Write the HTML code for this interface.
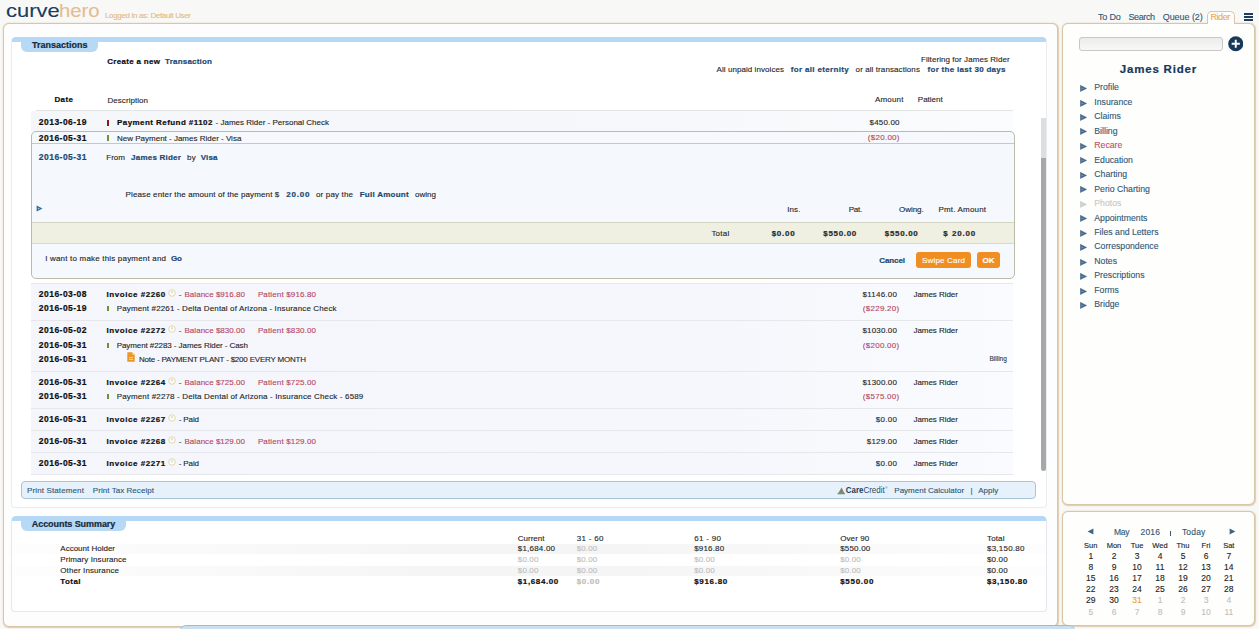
<!DOCTYPE html>
<html><head><meta charset="utf-8"><title>curvehero</title>
<style>
html,body{margin:0;padding:0}
body{width:1259px;height:629px;overflow:hidden;position:relative;background:#f8f8f7;font-family:"Liberation Sans",sans-serif}
.t{position:absolute;white-space:pre;-webkit-text-stroke:0.12px currentColor}
.ic{position:absolute;display:block}
.b{position:absolute;box-sizing:border-box}
</style></head><body>
<!-- logo -->

<!-- main outer panel -->
<div class="b" style="left:3px;top:23px;width:1055px;height:604px;border:1px solid #d9c6a8;border-radius:6px;background:#fdfdfd;box-shadow:0.8px 0.8px 1px rgba(210,175,130,.55),0 0 1.5px rgba(240,205,150,.5)"></div>
<!-- right panels -->
<div class="b" style="left:1062px;top:23px;width:193px;height:482px;border:1px solid #d9c6a8;border-radius:6px;background:#fefefd;box-shadow:0.8px 0.8px 1px rgba(210,175,130,.55),0 0 1.5px rgba(240,205,150,.5)"></div>
<div class="b" style="left:1062px;top:511px;width:193px;height:115px;border:1px solid #d9c6a8;border-radius:6px;background:#fefefd;box-shadow:0.8px 0.8px 1px rgba(210,175,130,.55),0 0 1.5px rgba(240,205,150,.5)"></div>

<!-- nav tab Rider -->
<div class="b" style="left:1207px;top:11px;width:28px;height:13px;border:1px solid #d9c6a8;border-bottom:none;border-radius:5px 5px 0 0;background:#fdfdfd"></div>
<!-- hamburger -->
<div class="b" style="left:1243.5px;top:13.4px;width:9px;height:1.7px;background:#1c3d62"></div>
<div class="b" style="left:1243.5px;top:16.4px;width:9px;height:1.7px;background:#1c3d62"></div>
<div class="b" style="left:1243.5px;top:19.4px;width:9px;height:1.7px;background:#1c3d62"></div>

<!-- transactions panel -->
<div class="b" style="left:11px;top:37px;width:1036px;height:471px;border:1px solid #eaedf0;border-top:5px solid #b4d8f6;border-radius:5px 5px 4px 4px;background:#fff"></div>
<div class="b" style="left:21px;top:41px;width:77px;height:10.5px;background:#b6d9f6;border-radius:0 0 6px 6px"></div>

<!-- header line -->
<div class="b" style="left:36px;top:110px;width:977px;height:1px;background:#e2e4e6"></div>
<!-- row 1 bg -->
<div class="b" style="left:31px;top:111px;width:982px;height:21px;background:linear-gradient(90deg,#f4f6fa,#f6f8fb 70%,#fbfcfd)"></div>
<div class="b" style="left:106.5px;top:120px;width:2.2px;height:5.5px;background:#8a1c1c"></div>

<!-- payment box -->
<div class="b" style="left:31px;top:131px;width:984px;height:147.5px;border:1px solid #b9bca6;border-radius:5px;background:#f5f8fc"></div>
<div class="b" style="left:32px;top:143px;width:982px;height:1px;background:#c4c7cb"></div>
<div class="b" style="left:32px;top:222px;width:982px;height:22px;background:#eff0e2;border-top:1px solid #d4d6c4;border-bottom:1px solid #d8dac8"></div>
<svg class="ic" style="left:35.5px;top:204.5px" width="7" height="7" viewBox="0 0 7 7"><path d="M0.6 0.6L6.4 3.5L0.6 6.4Z" fill="#2a6a9a"/><path d="M1.8 2.4L4 3.5L1.8 4.6Z" fill="#fff" opacity=".6"/></svg>
<div class="b" style="left:916px;top:252px;width:55px;height:16px;background:#f18e22;border-radius:3px"></div>
<div class="b" style="left:976.5px;top:252px;width:23px;height:16px;background:#f18e22;border-radius:3px"></div>

<!-- group bgs -->
<div class="b" style="left:31px;top:283px;width:982px;height:37px;background:linear-gradient(90deg,#f4f6fb,#f5f7fc 70%,#fafbfe);border-top:1px solid #e6e7eb"></div>
<div class="b" style="left:31px;top:320px;width:982px;height:51px;background:linear-gradient(90deg,#f4f6fb,#f5f7fc 70%,#fafbfe);border-top:1px solid #e6e7eb"></div>
<div class="b" style="left:31px;top:371px;width:982px;height:37px;background:linear-gradient(90deg,#f4f6fb,#f5f7fc 70%,#fafbfe);border-top:1px solid #e6e7eb"></div>
<div class="b" style="left:31px;top:408px;width:982px;height:22px;background:linear-gradient(90deg,#f4f6fb,#f5f7fc 70%,#fafbfe);border-top:1px solid #e6e7eb"></div>
<div class="b" style="left:31px;top:430px;width:982px;height:22px;background:linear-gradient(90deg,#f4f6fb,#f5f7fc 70%,#fafbfe);border-top:1px solid #e6e7eb"></div>
<div class="b" style="left:31px;top:452px;width:982px;height:23px;background:linear-gradient(90deg,#f4f6fb,#f5f7fc 70%,#fafbfe);border-top:1px solid #e6e7eb;border-bottom:1px solid #e6e7eb"></div>

<!-- scrollbar -->
<div class="b" style="left:1041px;top:118px;width:5px;height:352px;background:#dcdee0;border-radius:0 0 2px 2px"></div>
<div class="b" style="left:1041px;top:158px;width:4.5px;height:312.5px;background:#a6a7a8;border-radius:0 0 2.5px 2.5px"></div>

<!-- footer bar -->
<div class="b" style="left:21px;top:481px;width:1015px;height:18px;background:#e7f1fb;border:1px solid #a6c4dc;border-radius:4px"></div>
<svg class="ic" style="left:837px;top:485px" width="52" height="10" viewBox="0 0 52 10"><path d="M0.5 8.6C2 7.6 3.5 4 4.5 2.5C5.5 4 6.5 7 8 8.6Z" fill="#7c8a62"/><path d="M0.5 8.8H8" stroke="#5a6a80" stroke-width="0.8"/><text x="8.8" y="8.4" font-family="Liberation Sans" font-weight="700" font-size="8.8" fill="#1f3c5a" textLength="17.6" lengthAdjust="spacingAndGlyphs">Care</text><text x="26.4" y="8.4" font-family="Liberation Sans" font-size="8.8" fill="#2d4a66" textLength="21.4" lengthAdjust="spacingAndGlyphs">Credit</text><text x="48.2" y="4" font-family="Liberation Sans" font-size="3" fill="#2d4a66">®</text></svg>

<!-- accounts summary -->
<div class="b" style="left:11px;top:516px;width:1036px;height:96px;border:1px solid #e4e8ec;border-top:5px solid #b4d8f6;border-radius:5px 5px 4px 4px;background:#fff"></div>
<div class="b" style="left:21px;top:520px;width:105px;height:10.5px;background:#b6d9f6;border-radius:0 0 6px 6px"></div>
<div class="b" style="left:12px;top:543.5px;width:1034px;height:10.5px;background:linear-gradient(90deg,#fdfdfd,#f5f5f5 40%,#f5f5f5 60%,#fdfdfd)"></div>
<div class="b" style="left:12px;top:565.5px;width:1034px;height:10.5px;background:linear-gradient(90deg,#fdfdfd,#f5f5f5 40%,#f5f5f5 60%,#fdfdfd)"></div>

<!-- bottom blue bar -->
<div class="b" style="left:180px;top:625px;width:895px;height:10px;background:#cadff0;border-top:1px solid #9cbad6;border-radius:6px 6px 0 0"></div>

<!-- right panel: search + plus -->
<div class="b" style="left:1078.5px;top:37px;width:144px;height:13.5px;border:1px solid #c8c8c8;border-radius:3px;background:linear-gradient(#ececec,#f8f8f8)"></div>
<svg class="ic" style="left:1227.5px;top:36px" width="15.5" height="15.5" viewBox="0 0 16 16"><circle cx="8" cy="8" r="7.8" fill="#173a5a"/><path d="M8 3.8V12.2M3.8 8H12.2" stroke="#fff" stroke-width="2"/></svg>

<!-- calendar arrows -->
<div class="b" style="left:1170.4px;top:530.5px;width:1.1px;height:5px;background:#3d5a75"></div>
<svg class="ic" style="left:1087px;top:528px" width="7" height="7" viewBox="0 0 7 7"><path d="M6.4 0.6L0.6 3.5L6.4 6.4Z" fill="#3d6585"/></svg>
<svg class="ic" style="left:1229px;top:528px" width="7" height="7" viewBox="0 0 7 7"><path d="M0.6 0.6L6.4 3.5L0.6 6.4Z" fill="#3d6585"/></svg>

<span class='t' style='left:5.70px;top:2.00px;font-size:18.5px;line-height:18.5px;color:#1b3c60;transform:scaleX(1.1845);transform-origin:0 0'>curve</span>
<span class='t' style='left:59.20px;top:2.00px;font-size:18.5px;line-height:18.5px;color:#e4bd90;transform:scaleX(1.0964);transform-origin:0 0'>hero</span>
<span class='t' style='left:105.00px;top:12.00px;font-size:8px;line-height:8px;color:#e1bb84;letter-spacing:-0.349px'>Logged in as: Default User</span>
<span class='t' style='left:1097.90px;top:13.00px;font-size:9px;line-height:9px;color:#2f5877;letter-spacing:-0.154px'>To Do</span>
<span class='t' style='left:1128.40px;top:13.00px;font-size:9px;line-height:9px;color:#2f5877;letter-spacing:-0.366px'>Search</span>
<span class='t' style='left:1162.70px;top:13.00px;font-size:9px;line-height:9px;color:#2f5877;letter-spacing:-0.054px'>Queue (2)</span>
<span class='t' style='left:1210.50px;top:13.00px;font-size:9px;line-height:9px;color:#e8a85a;letter-spacing:-0.454px'>Rider</span>
<span class='t' style='left:32.00px;top:41.00px;font-size:9px;line-height:9px;color:#17293b;font-weight:700;-webkit-text-stroke:0.2px currentColor'>Transactions</span>
<span class='t' style='left:107.20px;top:58.00px;font-size:8.0px;line-height:8.0px;color:#0e0e0e;font-weight:700;-webkit-text-stroke:0.2px currentColor;letter-spacing:0.313px'>Create a new</span>
<span class='t' style='left:165.00px;top:58.00px;font-size:8.0px;line-height:8.0px;color:#1c4a72;font-weight:700;-webkit-text-stroke:0.2px currentColor;letter-spacing:0.209px'>Transaction</span>
<span class='t' style='left:921.00px;top:56.00px;font-size:8px;line-height:8px;color:#262626;letter-spacing:0.061px'>Filtering for James Rider</span>
<span class='t' style='left:716.50px;top:66.00px;font-size:8px;line-height:8px;color:#262626;letter-spacing:0.069px'>All unpaid invoices</span>
<span class='t' style='left:790.70px;top:66.00px;font-size:8.0px;line-height:8.0px;color:#1c4a72;font-weight:700;-webkit-text-stroke:0.2px currentColor;letter-spacing:0.340px'>for all eternity</span>
<span class='t' style='left:855.60px;top:66.00px;font-size:8px;line-height:8px;color:#262626;letter-spacing:0.089px'>or all transactions</span>
<span class='t' style='left:927.50px;top:66.00px;font-size:8.0px;line-height:8.0px;color:#1c4a72;font-weight:700;-webkit-text-stroke:0.2px currentColor;letter-spacing:0.290px'>for the last 30 days</span>
<span class='t' style='left:54.40px;top:96.00px;font-size:8.0px;line-height:8.0px;color:#0e0e0e;font-weight:700;-webkit-text-stroke:0.2px currentColor;letter-spacing:0.385px'>Date</span>
<span class='t' style='left:107.50px;top:97.00px;font-size:8px;line-height:8px;color:#262626;letter-spacing:0.048px'>Description</span>
<span class='t' style='left:874.90px;top:96.00px;font-size:8px;line-height:8px;color:#262626;letter-spacing:0.184px'>Amount</span>
<span class='t' style='left:917.80px;top:96.00px;font-size:8px;line-height:8px;color:#262626'>Patient</span>
<span class='t' style='left:38.80px;top:118.00px;font-size:8.5px;line-height:8.5px;color:#0e0e0e;font-weight:700;-webkit-text-stroke:0.2px currentColor;letter-spacing:0.468px'>2013-06-19</span>
<span class='t' style='left:117.00px;top:119.00px;font-size:8.0px;line-height:8.0px;color:#0e0e0e;font-weight:700;-webkit-text-stroke:0.2px currentColor;letter-spacing:0.434px'>Payment Refund #1102</span>
<span class='t' style='left:215.60px;top:119.00px;font-size:8px;line-height:8px;color:#262626'>- James Rider - Personal Check</span>
<span class='t' style='left:869.50px;top:119.00px;font-size:8px;line-height:8px;color:#262626;letter-spacing:0.180px'>$450.00</span>
<span class='t' style='left:38.80px;top:134.00px;font-size:8.5px;line-height:8.5px;color:#0e0e0e;font-weight:700;-webkit-text-stroke:0.2px currentColor;letter-spacing:0.468px'>2016-05-31</span>
<div class='ic' style='left:106.5px;top:135.3px;width:2.5px;height:5.5px;background:#6f8f3a'></div>
<span class='t' style='left:117.00px;top:135.00px;font-size:8px;line-height:8px;color:#262626'>New Payment - James Rider - Visa</span>
<span class='t' style='left:867.80px;top:134.00px;font-size:8px;line-height:8px;color:#b7475f;letter-spacing:0.272px'>($20.00)</span>
<span class='t' style='left:38.80px;top:153.00px;font-size:8.5px;line-height:8.5px;color:#1c4a72;font-weight:700;-webkit-text-stroke:0.2px currentColor;letter-spacing:0.468px'>2016-05-31</span>
<span class='t' style='left:106.30px;top:154.00px;font-size:8px;line-height:8px;color:#262626;letter-spacing:-0.024px'>From</span>
<span class='t' style='left:131.10px;top:154.00px;font-size:8.0px;line-height:8.0px;color:#1c4a72;font-weight:700;-webkit-text-stroke:0.2px currentColor;letter-spacing:0.211px'>James Rider</span>
<span class='t' style='left:187.00px;top:154.00px;font-size:8px;line-height:8px;color:#262626;letter-spacing:0.347px'>by</span>
<span class='t' style='left:200.70px;top:154.00px;font-size:8.0px;line-height:8.0px;color:#1c4a72;font-weight:700;-webkit-text-stroke:0.2px currentColor;letter-spacing:0.163px'>Visa</span>
<span class='t' style='left:125.60px;top:191.00px;font-size:8px;line-height:8px;color:#262626;letter-spacing:0.121px'>Please enter the amount of the payment $</span>
<span class='t' style='left:286.30px;top:191.00px;font-size:8.0px;line-height:8.0px;color:#1c4a72;font-weight:700;-webkit-text-stroke:0.2px currentColor;letter-spacing:0.767px'>20.00</span>
<span class='t' style='left:316.00px;top:191.00px;font-size:8px;line-height:8px;color:#262626;letter-spacing:0.158px'>or pay the</span>
<span class='t' style='left:359.70px;top:191.00px;font-size:8.0px;line-height:8.0px;color:#1c4a72;font-weight:700;-webkit-text-stroke:0.2px currentColor;letter-spacing:0.264px'>Full Amount</span>
<span class='t' style='left:415.00px;top:191.00px;font-size:8px;line-height:8px;color:#262626;letter-spacing:0.023px'>owing</span>
<span class='t' style='left:787.20px;top:206.00px;font-size:8px;line-height:8px;color:#262626;letter-spacing:0.098px'>Ins.</span>
<span class='t' style='left:848.70px;top:206.00px;font-size:8px;line-height:8px;color:#262626;letter-spacing:-0.245px'>Pat.</span>
<span class='t' style='left:899.00px;top:206.00px;font-size:8px;line-height:8px;color:#262626;letter-spacing:-0.041px'>Owing.</span>
<span class='t' style='left:938.40px;top:206.00px;font-size:8px;line-height:8px;color:#262626;letter-spacing:0.180px'>Pmt. Amount</span>
<span class='t' style='left:711.40px;top:230.00px;font-size:8px;line-height:8px;color:#262626;letter-spacing:0.223px'>Total</span>
<span class='t' style='left:771.70px;top:230.00px;font-size:8.0px;line-height:8.0px;color:#2a2a2a;font-weight:700;-webkit-text-stroke:0.2px currentColor;letter-spacing:0.717px'>$0.00</span>
<span class='t' style='left:823.30px;top:230.00px;font-size:8.0px;line-height:8.0px;color:#2a2a2a;font-weight:700;-webkit-text-stroke:0.2px currentColor;letter-spacing:0.680px'>$550.00</span>
<span class='t' style='left:884.80px;top:230.00px;font-size:8.0px;line-height:8.0px;color:#2a2a2a;font-weight:700;-webkit-text-stroke:0.2px currentColor;letter-spacing:0.680px'>$550.00</span>
<span class='t' style='left:943.30px;top:230.00px;font-size:8.0px;line-height:8.0px;color:#2a2a2a;font-weight:700;-webkit-text-stroke:0.2px currentColor'>$</span>
<span class='t' style='left:952.00px;top:230.00px;font-size:8.0px;line-height:8.0px;color:#2a2a2a;font-weight:700;-webkit-text-stroke:0.2px currentColor;letter-spacing:0.817px'>20.00</span>
<span class='t' style='left:45.20px;top:255.00px;font-size:8px;line-height:8px;color:#262626;letter-spacing:0.188px'>I want to make this payment and</span>
<span class='t' style='left:171.00px;top:255.00px;font-size:8.0px;line-height:8.0px;color:#1c4a72;font-weight:700;-webkit-text-stroke:0.2px currentColor;letter-spacing:-0.309px'>Go</span>
<span class='t' style='left:879.20px;top:257.00px;font-size:8.0px;line-height:8.0px;color:#1c4a72;font-weight:700;-webkit-text-stroke:0.2px currentColor;letter-spacing:-0.067px'>Cancel</span>
<span class='t' style='left:922.00px;top:257.00px;font-size:8px;line-height:8px;color:#ffffff;letter-spacing:0.182px'>Swipe Card</span>
<span class='t' style='left:982.50px;top:257.00px;font-size:8.0px;line-height:8.0px;color:#ffffff;font-weight:700;-webkit-text-stroke:0.2px currentColor'>OK</span>
<span class='t' style='left:38.80px;top:290.00px;font-size:8.5px;line-height:8.5px;color:#0e0e0e;font-weight:700;-webkit-text-stroke:0.2px currentColor;letter-spacing:0.468px'>2016-03-08</span>
<span class='t' style='left:106.60px;top:291.00px;font-size:8.0px;line-height:8.0px;color:#0e0e0e;font-weight:700;-webkit-text-stroke:0.2px currentColor;letter-spacing:0.554px'>Invoice #2260</span>
<svg class='ic' style='left:168.1px;top:288.7px' width='8' height='8' viewBox='0 0 8 8'><circle cx='4' cy='4' r='3.3' fill='#fdfdf6' stroke='#ddd6a6' stroke-width='0.9'/><path d='M4 2.2V4.3' stroke='#a8a0b8' stroke-width='0.7'/></svg>
<span class='t' style='left:178.70px;top:291.00px;font-size:8px;line-height:8px;color:#262626'>-</span>
<span class='t' style='left:184.50px;top:291.00px;font-size:8px;line-height:8px;color:#b7475f;letter-spacing:0.031px'>Balance $916.80</span>
<span class='t' style='left:257.90px;top:291.00px;font-size:8px;line-height:8px;color:#b7475f;letter-spacing:0.147px'>Patient $916.80</span>
<span class='t' style='left:862.50px;top:291.00px;font-size:8px;line-height:8px;color:#262626;letter-spacing:0.231px'>$1146.00</span>
<span class='t' style='left:913.50px;top:291.00px;font-size:8px;line-height:8px;color:#262626;letter-spacing:-0.051px'>James Rider</span>
<span class='t' style='left:38.80px;top:304.00px;font-size:8.5px;line-height:8.5px;color:#0e0e0e;font-weight:700;-webkit-text-stroke:0.2px currentColor;letter-spacing:0.468px'>2016-05-19</span>
<div class='ic' style='left:106.5px;top:305.5px;width:2.5px;height:5.5px;background:#6f8f3a'></div>
<span class='t' style='left:116.70px;top:305.00px;font-size:8px;line-height:8px;color:#262626;letter-spacing:0.139px'>Payment #2261 - Delta Dental of Arizona - Insurance Check</span>
<span class='t' style='left:862.80px;top:305.00px;font-size:8px;line-height:8px;color:#b7475f;letter-spacing:0.269px'>($229.20)</span>
<span class='t' style='left:38.80px;top:326.00px;font-size:8.5px;line-height:8.5px;color:#0e0e0e;font-weight:700;-webkit-text-stroke:0.2px currentColor;letter-spacing:0.468px'>2016-05-02</span>
<span class='t' style='left:106.60px;top:327.00px;font-size:8.0px;line-height:8.0px;color:#0e0e0e;font-weight:700;-webkit-text-stroke:0.2px currentColor;letter-spacing:0.554px'>Invoice #2272</span>
<svg class='ic' style='left:168.1px;top:324.7px' width='8' height='8' viewBox='0 0 8 8'><circle cx='4' cy='4' r='3.3' fill='#fdfdf6' stroke='#ddd6a6' stroke-width='0.9'/><path d='M4 2.2V4.3' stroke='#a8a0b8' stroke-width='0.7'/></svg>
<span class='t' style='left:178.70px;top:327.00px;font-size:8px;line-height:8px;color:#262626'>-</span>
<span class='t' style='left:184.50px;top:327.00px;font-size:8px;line-height:8px;color:#b7475f;letter-spacing:0.031px'>Balance $830.00</span>
<span class='t' style='left:257.90px;top:327.00px;font-size:8px;line-height:8px;color:#b7475f;letter-spacing:0.147px'>Patient $830.00</span>
<span class='t' style='left:862.50px;top:327.00px;font-size:8px;line-height:8px;color:#262626;letter-spacing:0.146px'>$1030.00</span>
<span class='t' style='left:913.50px;top:327.00px;font-size:8px;line-height:8px;color:#262626;letter-spacing:-0.051px'>James Rider</span>
<span class='t' style='left:38.80px;top:341.00px;font-size:8.5px;line-height:8.5px;color:#0e0e0e;font-weight:700;-webkit-text-stroke:0.2px currentColor;letter-spacing:0.468px'>2016-05-31</span>
<div class='ic' style='left:106.5px;top:342.5px;width:2.5px;height:5.5px;background:#6f8f3a'></div>
<span class='t' style='left:116.70px;top:342.00px;font-size:8px;line-height:8px;color:#262626;letter-spacing:-0.077px'>Payment #2283 - James Rider - Cash</span>
<span class='t' style='left:862.80px;top:342.00px;font-size:8px;line-height:8px;color:#b7475f;letter-spacing:0.269px'>($200.00)</span>
<span class='t' style='left:38.80px;top:355.00px;font-size:8.5px;line-height:8.5px;color:#0e0e0e;font-weight:700;-webkit-text-stroke:0.2px currentColor;letter-spacing:0.468px'>2016-05-31</span>
<svg class='ic' style='left:127.4px;top:352.0px' width='8' height='10' viewBox='0 0 8 10'><path d='M0.3 0.3H5.2L7.7 2.8V9.7H0.3Z' fill='#ec9424'/><path d='M5.2 0.3V2.8H7.7' fill='#ffd08a'/><path d='M2 5.6H6M2 7.4H6' stroke='#ffe6c0' stroke-width='0.8'/></svg>
<span class='t' style='left:139.00px;top:356.00px;font-size:8px;line-height:8px;color:#262626;letter-spacing:-0.204px'>Note - PAYMENT PLANT - $200 EVERY MONTH</span>
<span class='t' style='left:989.50px;top:356.00px;font-size:6.5px;line-height:6.5px;color:#333'>Billing</span>
<span class='t' style='left:38.80px;top:378.00px;font-size:8.5px;line-height:8.5px;color:#0e0e0e;font-weight:700;-webkit-text-stroke:0.2px currentColor;letter-spacing:0.468px'>2016-05-31</span>
<span class='t' style='left:106.60px;top:379.00px;font-size:8.0px;line-height:8.0px;color:#0e0e0e;font-weight:700;-webkit-text-stroke:0.2px currentColor;letter-spacing:0.554px'>Invoice #2264</span>
<svg class='ic' style='left:168.1px;top:376.7px' width='8' height='8' viewBox='0 0 8 8'><circle cx='4' cy='4' r='3.3' fill='#fdfdf6' stroke='#ddd6a6' stroke-width='0.9'/><path d='M4 2.2V4.3' stroke='#a8a0b8' stroke-width='0.7'/></svg>
<span class='t' style='left:178.70px;top:379.00px;font-size:8px;line-height:8px;color:#262626'>-</span>
<span class='t' style='left:184.50px;top:379.00px;font-size:8px;line-height:8px;color:#b7475f;letter-spacing:0.031px'>Balance $725.00</span>
<span class='t' style='left:257.90px;top:379.00px;font-size:8px;line-height:8px;color:#b7475f;letter-spacing:0.147px'>Patient $725.00</span>
<span class='t' style='left:862.50px;top:379.00px;font-size:8px;line-height:8px;color:#262626;letter-spacing:0.146px'>$1300.00</span>
<span class='t' style='left:913.50px;top:379.00px;font-size:8px;line-height:8px;color:#262626;letter-spacing:-0.051px'>James Rider</span>
<span class='t' style='left:38.80px;top:392.00px;font-size:8.5px;line-height:8.5px;color:#0e0e0e;font-weight:700;-webkit-text-stroke:0.2px currentColor;letter-spacing:0.468px'>2016-05-31</span>
<div class='ic' style='left:106.5px;top:393.5px;width:2.5px;height:5.5px;background:#6f8f3a'></div>
<span class='t' style='left:116.70px;top:393.00px;font-size:8px;line-height:8px;color:#262626;letter-spacing:0.152px'>Payment #2278 - Delta Dental of Arizona - Insurance Check - 6589</span>
<span class='t' style='left:862.80px;top:393.00px;font-size:8px;line-height:8px;color:#b7475f;letter-spacing:0.269px'>($575.00)</span>
<span class='t' style='left:38.80px;top:415.00px;font-size:8.5px;line-height:8.5px;color:#0e0e0e;font-weight:700;-webkit-text-stroke:0.2px currentColor;letter-spacing:0.468px'>2016-05-31</span>
<span class='t' style='left:106.60px;top:416.00px;font-size:8.0px;line-height:8.0px;color:#0e0e0e;font-weight:700;-webkit-text-stroke:0.2px currentColor;letter-spacing:0.554px'>Invoice #2267</span>
<svg class='ic' style='left:168.1px;top:413.7px' width='8' height='8' viewBox='0 0 8 8'><circle cx='4' cy='4' r='3.3' fill='#fdfdf6' stroke='#ddd6a6' stroke-width='0.9'/><path d='M4 2.2V4.3' stroke='#a8a0b8' stroke-width='0.7'/></svg>
<span class='t' style='left:178.70px;top:416.00px;font-size:8px;line-height:8px;color:#262626;letter-spacing:-0.121px'>- Paid</span>
<span class='t' style='left:875.80px;top:416.00px;font-size:8px;line-height:8px;color:#262626;letter-spacing:0.267px'>$0.00</span>
<span class='t' style='left:913.50px;top:416.00px;font-size:8px;line-height:8px;color:#262626;letter-spacing:-0.051px'>James Rider</span>
<span class='t' style='left:38.80px;top:437.00px;font-size:8.5px;line-height:8.5px;color:#0e0e0e;font-weight:700;-webkit-text-stroke:0.2px currentColor;letter-spacing:0.468px'>2016-05-31</span>
<span class='t' style='left:106.60px;top:438.00px;font-size:8.0px;line-height:8.0px;color:#0e0e0e;font-weight:700;-webkit-text-stroke:0.2px currentColor;letter-spacing:0.554px'>Invoice #2268</span>
<svg class='ic' style='left:168.1px;top:435.7px' width='8' height='8' viewBox='0 0 8 8'><circle cx='4' cy='4' r='3.3' fill='#fdfdf6' stroke='#ddd6a6' stroke-width='0.9'/><path d='M4 2.2V4.3' stroke='#a8a0b8' stroke-width='0.7'/></svg>
<span class='t' style='left:178.70px;top:438.00px;font-size:8px;line-height:8px;color:#262626'>-</span>
<span class='t' style='left:184.50px;top:438.00px;font-size:8px;line-height:8px;color:#b7475f;letter-spacing:0.031px'>Balance $129.00</span>
<span class='t' style='left:257.90px;top:438.00px;font-size:8px;line-height:8px;color:#b7475f;letter-spacing:0.147px'>Patient $129.00</span>
<span class='t' style='left:866.80px;top:438.00px;font-size:8px;line-height:8px;color:#262626;letter-spacing:0.196px'>$129.00</span>
<span class='t' style='left:913.50px;top:438.00px;font-size:8px;line-height:8px;color:#262626;letter-spacing:-0.051px'>James Rider</span>
<span class='t' style='left:38.80px;top:459.00px;font-size:8.5px;line-height:8.5px;color:#0e0e0e;font-weight:700;-webkit-text-stroke:0.2px currentColor;letter-spacing:0.468px'>2016-05-31</span>
<span class='t' style='left:106.60px;top:460.00px;font-size:8.0px;line-height:8.0px;color:#0e0e0e;font-weight:700;-webkit-text-stroke:0.2px currentColor;letter-spacing:0.554px'>Invoice #2271</span>
<svg class='ic' style='left:168.1px;top:457.7px' width='8' height='8' viewBox='0 0 8 8'><circle cx='4' cy='4' r='3.3' fill='#fdfdf6' stroke='#ddd6a6' stroke-width='0.9'/><path d='M4 2.2V4.3' stroke='#a8a0b8' stroke-width='0.7'/></svg>
<span class='t' style='left:178.70px;top:460.00px;font-size:8px;line-height:8px;color:#262626;letter-spacing:-0.121px'>- Paid</span>
<span class='t' style='left:875.80px;top:460.00px;font-size:8px;line-height:8px;color:#262626;letter-spacing:0.267px'>$0.00</span>
<span class='t' style='left:913.50px;top:460.00px;font-size:8px;line-height:8px;color:#262626;letter-spacing:-0.051px'>James Rider</span>
<span class='t' style='left:27.00px;top:487.00px;font-size:8px;line-height:8px;color:#2f5877;letter-spacing:0.126px'>Print Statement</span>
<span class='t' style='left:92.80px;top:487.00px;font-size:8px;line-height:8px;color:#2f5877;letter-spacing:0.054px'>Print Tax Receipt</span>
<span class='t' style='left:894.30px;top:487.00px;font-size:8px;line-height:8px;color:#2f5877'>Payment Calculator</span>
<span class='t' style='left:970.50px;top:487.00px;font-size:8px;line-height:8px;color:#2f5877'>|</span>
<span class='t' style='left:978.20px;top:487.00px;font-size:8px;line-height:8px;color:#2f5877'>Apply</span>
<span class='t' style='left:31.80px;top:520.00px;font-size:9px;line-height:9px;color:#17293b;font-weight:700;-webkit-text-stroke:0.2px currentColor;letter-spacing:-0.069px'>Accounts Summary</span>
<span class='t' style='left:60.30px;top:545.00px;font-size:8px;line-height:8px;color:#262626'>Account Holder</span>
<span class='t' style='left:60.30px;top:556.00px;font-size:8px;line-height:8px;color:#262626;letter-spacing:0.080px'>Primary Insurance</span>
<span class='t' style='left:60.30px;top:567.00px;font-size:8px;line-height:8px;color:#262626;letter-spacing:0.095px'>Other Insurance</span>
<span class='t' style='left:60.30px;top:578.00px;font-size:8.0px;line-height:8.0px;color:#0e0e0e;font-weight:700;-webkit-text-stroke:0.2px currentColor;letter-spacing:0.421px'>Total</span>
<span class='t' style='left:517.80px;top:535.00px;font-size:8px;line-height:8px;color:#262626'>Current</span>
<span class='t' style='left:576.70px;top:535.00px;font-size:8px;line-height:8px;color:#262626;letter-spacing:0.299px'>31 - 60</span>
<span class='t' style='left:694.20px;top:535.00px;font-size:8px;line-height:8px;color:#262626;letter-spacing:0.299px'>61 - 90</span>
<span class='t' style='left:840.20px;top:535.00px;font-size:8px;line-height:8px;color:#262626;letter-spacing:0.089px'>Over 90</span>
<span class='t' style='left:987.00px;top:535.00px;font-size:8px;line-height:8px;color:#262626;letter-spacing:0.148px'>Total</span>
<span class='t' style='left:517.80px;top:545.00px;font-size:8px;line-height:8px;color:#262626;letter-spacing:0.201px'>$1,684.00</span>
<span class='t' style='left:576.70px;top:545.00px;font-size:8px;line-height:8px;color:#bdbdbd;letter-spacing:0.142px'>$0.00</span>
<span class='t' style='left:694.20px;top:545.00px;font-size:8px;line-height:8px;color:#262626;letter-spacing:0.180px'>$916.80</span>
<span class='t' style='left:840.20px;top:545.00px;font-size:8px;line-height:8px;color:#262626;letter-spacing:0.196px'>$550.00</span>
<span class='t' style='left:987.00px;top:545.00px;font-size:8px;line-height:8px;color:#262626;letter-spacing:0.226px'>$3,150.80</span>
<span class='t' style='left:517.80px;top:556.00px;font-size:8px;line-height:8px;color:#bdbdbd;letter-spacing:0.142px'>$0.00</span>
<span class='t' style='left:576.70px;top:556.00px;font-size:8px;line-height:8px;color:#bdbdbd;letter-spacing:0.142px'>$0.00</span>
<span class='t' style='left:694.20px;top:556.00px;font-size:8px;line-height:8px;color:#bdbdbd;letter-spacing:0.142px'>$0.00</span>
<span class='t' style='left:840.20px;top:556.00px;font-size:8px;line-height:8px;color:#bdbdbd;letter-spacing:0.142px'>$0.00</span>
<span class='t' style='left:987.00px;top:556.00px;font-size:8px;line-height:8px;color:#262626;letter-spacing:0.142px'>$0.00</span>
<span class='t' style='left:517.80px;top:567.00px;font-size:8px;line-height:8px;color:#bdbdbd;letter-spacing:0.142px'>$0.00</span>
<span class='t' style='left:576.70px;top:567.00px;font-size:8px;line-height:8px;color:#bdbdbd;letter-spacing:0.142px'>$0.00</span>
<span class='t' style='left:694.20px;top:567.00px;font-size:8px;line-height:8px;color:#bdbdbd;letter-spacing:0.142px'>$0.00</span>
<span class='t' style='left:840.20px;top:567.00px;font-size:8px;line-height:8px;color:#bdbdbd;letter-spacing:0.142px'>$0.00</span>
<span class='t' style='left:987.00px;top:567.00px;font-size:8px;line-height:8px;color:#262626;letter-spacing:0.142px'>$0.00</span>
<span class='t' style='left:517.80px;top:578.00px;font-size:8.0px;line-height:8.0px;color:#0e0e0e;font-weight:700;-webkit-text-stroke:0.2px currentColor;letter-spacing:0.613px'>$1,684.00</span>
<span class='t' style='left:576.70px;top:578.00px;font-size:8.0px;line-height:8.0px;color:#bdbdbd;font-weight:700;-webkit-text-stroke:0.2px currentColor;letter-spacing:0.667px'>$0.00</span>
<span class='t' style='left:694.20px;top:578.00px;font-size:8.0px;line-height:8.0px;color:#0e0e0e;font-weight:700;-webkit-text-stroke:0.2px currentColor;letter-spacing:0.696px'>$916.80</span>
<span class='t' style='left:840.20px;top:578.00px;font-size:8.0px;line-height:8.0px;color:#0e0e0e;font-weight:700;-webkit-text-stroke:0.2px currentColor;letter-spacing:0.713px'>$550.00</span>
<span class='t' style='left:987.00px;top:578.00px;font-size:8.0px;line-height:8.0px;color:#0e0e0e;font-weight:700;-webkit-text-stroke:0.2px currentColor;letter-spacing:0.576px'>$3,150.80</span>
<span class='t' style='left:1119.80px;top:64.00px;font-size:11.5px;line-height:11.5px;color:#17375a;font-weight:700;-webkit-text-stroke:0.2px currentColor;letter-spacing:0.799px'>James Rider</span>
<span class='t' style='left:1094.30px;top:83.00px;font-size:8.7px;line-height:8.7px;color:#2f5877'>Profile</span>
<svg class='ic' style='left:1080.2px;top:85.0px' width='7' height='7' viewBox='0 0 7 7'><path d='M0.3 0.3L6.6 3.4L0.3 6.5Z' fill='#47698a' stroke='#47698a' stroke-width='0.5' stroke-linejoin='round'/><path d='M1.6 2.5L3.6 3.4L1.6 4.3Z' fill='#fff' opacity='.35'/></svg>
<span class='t' style='left:1094.30px;top:98.00px;font-size:8.7px;line-height:8.7px;color:#2f5877'>Insurance</span>
<svg class='ic' style='left:1080.2px;top:99.5px' width='7' height='7' viewBox='0 0 7 7'><path d='M0.3 0.3L6.6 3.4L0.3 6.5Z' fill='#47698a' stroke='#47698a' stroke-width='0.5' stroke-linejoin='round'/><path d='M1.6 2.5L3.6 3.4L1.6 4.3Z' fill='#fff' opacity='.35'/></svg>
<span class='t' style='left:1094.30px;top:112.00px;font-size:8.7px;line-height:8.7px;color:#2f5877'>Claims</span>
<svg class='ic' style='left:1080.2px;top:113.9px' width='7' height='7' viewBox='0 0 7 7'><path d='M0.3 0.3L6.6 3.4L0.3 6.5Z' fill='#47698a' stroke='#47698a' stroke-width='0.5' stroke-linejoin='round'/><path d='M1.6 2.5L3.6 3.4L1.6 4.3Z' fill='#fff' opacity='.35'/></svg>
<span class='t' style='left:1094.30px;top:127.00px;font-size:8.7px;line-height:8.7px;color:#2f5877'>Billing</span>
<svg class='ic' style='left:1080.2px;top:128.4px' width='7' height='7' viewBox='0 0 7 7'><path d='M0.3 0.3L6.6 3.4L0.3 6.5Z' fill='#47698a' stroke='#47698a' stroke-width='0.5' stroke-linejoin='round'/><path d='M1.6 2.5L3.6 3.4L1.6 4.3Z' fill='#fff' opacity='.35'/></svg>
<span class='t' style='left:1094.30px;top:141.00px;font-size:8.7px;line-height:8.7px;color:#c0506a'>Recare</span>
<svg class='ic' style='left:1080.2px;top:142.9px' width='7' height='7' viewBox='0 0 7 7'><path d='M0.3 0.3L6.6 3.4L0.3 6.5Z' fill='#47698a' stroke='#47698a' stroke-width='0.5' stroke-linejoin='round'/><path d='M1.6 2.5L3.6 3.4L1.6 4.3Z' fill='#fff' opacity='.35'/></svg>
<span class='t' style='left:1094.30px;top:156.00px;font-size:8.7px;line-height:8.7px;color:#2f5877'>Education</span>
<svg class='ic' style='left:1080.2px;top:157.3px' width='7' height='7' viewBox='0 0 7 7'><path d='M0.3 0.3L6.6 3.4L0.3 6.5Z' fill='#47698a' stroke='#47698a' stroke-width='0.5' stroke-linejoin='round'/><path d='M1.6 2.5L3.6 3.4L1.6 4.3Z' fill='#fff' opacity='.35'/></svg>
<span class='t' style='left:1094.30px;top:170.00px;font-size:8.7px;line-height:8.7px;color:#2f5877'>Charting</span>
<svg class='ic' style='left:1080.2px;top:171.8px' width='7' height='7' viewBox='0 0 7 7'><path d='M0.3 0.3L6.6 3.4L0.3 6.5Z' fill='#47698a' stroke='#47698a' stroke-width='0.5' stroke-linejoin='round'/><path d='M1.6 2.5L3.6 3.4L1.6 4.3Z' fill='#fff' opacity='.35'/></svg>
<span class='t' style='left:1094.30px;top:185.00px;font-size:8.7px;line-height:8.7px;color:#2f5877'>Perio Charting</span>
<svg class='ic' style='left:1080.2px;top:186.3px' width='7' height='7' viewBox='0 0 7 7'><path d='M0.3 0.3L6.6 3.4L0.3 6.5Z' fill='#47698a' stroke='#47698a' stroke-width='0.5' stroke-linejoin='round'/><path d='M1.6 2.5L3.6 3.4L1.6 4.3Z' fill='#fff' opacity='.35'/></svg>
<span class='t' style='left:1094.30px;top:199.00px;font-size:8.7px;line-height:8.7px;color:#c8c8c8'>Photos</span>
<svg class='ic' style='left:1080.2px;top:200.8px' width='7' height='7' viewBox='0 0 7 7'><path d='M0.3 0.3L6.6 3.4L0.3 6.5Z' fill='#c8ccd0' stroke='#c8ccd0' stroke-width='0.5' stroke-linejoin='round'/><path d='M1.6 2.5L3.6 3.4L1.6 4.3Z' fill='#fff' opacity='.35'/></svg>
<span class='t' style='left:1094.30px;top:214.00px;font-size:8.7px;line-height:8.7px;color:#2f5877'>Appointments</span>
<svg class='ic' style='left:1080.2px;top:215.2px' width='7' height='7' viewBox='0 0 7 7'><path d='M0.3 0.3L6.6 3.4L0.3 6.5Z' fill='#47698a' stroke='#47698a' stroke-width='0.5' stroke-linejoin='round'/><path d='M1.6 2.5L3.6 3.4L1.6 4.3Z' fill='#fff' opacity='.35'/></svg>
<span class='t' style='left:1094.30px;top:228.00px;font-size:8.7px;line-height:8.7px;color:#2f5877'>Files and Letters</span>
<svg class='ic' style='left:1080.2px;top:229.7px' width='7' height='7' viewBox='0 0 7 7'><path d='M0.3 0.3L6.6 3.4L0.3 6.5Z' fill='#47698a' stroke='#47698a' stroke-width='0.5' stroke-linejoin='round'/><path d='M1.6 2.5L3.6 3.4L1.6 4.3Z' fill='#fff' opacity='.35'/></svg>
<span class='t' style='left:1094.30px;top:242.00px;font-size:8.7px;line-height:8.7px;color:#2f5877'>Correspondence</span>
<svg class='ic' style='left:1080.2px;top:244.2px' width='7' height='7' viewBox='0 0 7 7'><path d='M0.3 0.3L6.6 3.4L0.3 6.5Z' fill='#47698a' stroke='#47698a' stroke-width='0.5' stroke-linejoin='round'/><path d='M1.6 2.5L3.6 3.4L1.6 4.3Z' fill='#fff' opacity='.35'/></svg>
<span class='t' style='left:1094.30px;top:257.00px;font-size:8.7px;line-height:8.7px;color:#2f5877'>Notes</span>
<svg class='ic' style='left:1080.2px;top:258.6px' width='7' height='7' viewBox='0 0 7 7'><path d='M0.3 0.3L6.6 3.4L0.3 6.5Z' fill='#47698a' stroke='#47698a' stroke-width='0.5' stroke-linejoin='round'/><path d='M1.6 2.5L3.6 3.4L1.6 4.3Z' fill='#fff' opacity='.35'/></svg>
<span class='t' style='left:1094.30px;top:271.00px;font-size:8.7px;line-height:8.7px;color:#2f5877'>Prescriptions</span>
<svg class='ic' style='left:1080.2px;top:273.1px' width='7' height='7' viewBox='0 0 7 7'><path d='M0.3 0.3L6.6 3.4L0.3 6.5Z' fill='#47698a' stroke='#47698a' stroke-width='0.5' stroke-linejoin='round'/><path d='M1.6 2.5L3.6 3.4L1.6 4.3Z' fill='#fff' opacity='.35'/></svg>
<span class='t' style='left:1094.30px;top:286.00px;font-size:8.7px;line-height:8.7px;color:#2f5877'>Forms</span>
<svg class='ic' style='left:1080.2px;top:287.6px' width='7' height='7' viewBox='0 0 7 7'><path d='M0.3 0.3L6.6 3.4L0.3 6.5Z' fill='#47698a' stroke='#47698a' stroke-width='0.5' stroke-linejoin='round'/><path d='M1.6 2.5L3.6 3.4L1.6 4.3Z' fill='#fff' opacity='.35'/></svg>
<span class='t' style='left:1094.30px;top:300.00px;font-size:8.7px;line-height:8.7px;color:#2f5877'>Bridge</span>
<svg class='ic' style='left:1080.2px;top:302.1px' width='7' height='7' viewBox='0 0 7 7'><path d='M0.3 0.3L6.6 3.4L0.3 6.5Z' fill='#47698a' stroke='#47698a' stroke-width='0.5' stroke-linejoin='round'/><path d='M1.6 2.5L3.6 3.4L1.6 4.3Z' fill='#fff' opacity='.35'/></svg>
<span class='t' style='left:1114.00px;top:528.00px;font-size:8.5px;line-height:8.5px;color:#2f5877;letter-spacing:-0.281px'>May</span>
<span class='t' style='left:1140.50px;top:528.00px;font-size:8.5px;line-height:8.5px;color:#2f5877;letter-spacing:0.193px'>2016</span>
<span class='t' style='left:1181.90px;top:528.00px;font-size:8.5px;line-height:8.5px;color:#2f5877;letter-spacing:0.178px'>Today</span>
<span class='t' style='left:1084.12px;top:542.00px;font-size:7.5px;line-height:7.5px;color:#222'>Sun</span>
<span class='t' style='left:1106.70px;top:542.00px;font-size:7.5px;line-height:7.5px;color:#222'>Mon</span>
<span class='t' style='left:1130.77px;top:542.00px;font-size:7.5px;line-height:7.5px;color:#222'>Tue</span>
<span class='t' style='left:1152.35px;top:542.00px;font-size:7.5px;line-height:7.5px;color:#222'>Wed</span>
<span class='t' style='left:1176.53px;top:542.00px;font-size:7.5px;line-height:7.5px;color:#222'>Thu</span>
<span class='t' style='left:1201.62px;top:542.00px;font-size:7.5px;line-height:7.5px;color:#222'>Fri</span>
<span class='t' style='left:1223.17px;top:542.00px;font-size:7.5px;line-height:7.5px;color:#222'>Sat</span>
<span class='t' style='left:1088.43px;top:552.00px;font-size:8.5px;line-height:8.5px;color:#222'>1</span>
<span class='t' style='left:1111.63px;top:552.00px;font-size:8.5px;line-height:8.5px;color:#222'>2</span>
<span class='t' style='left:1134.73px;top:552.00px;font-size:8.5px;line-height:8.5px;color:#222'>3</span>
<span class='t' style='left:1157.63px;top:552.00px;font-size:8.5px;line-height:8.5px;color:#222'>4</span>
<span class='t' style='left:1180.63px;top:552.00px;font-size:8.5px;line-height:8.5px;color:#222'>5</span>
<span class='t' style='left:1203.63px;top:552.00px;font-size:8.5px;line-height:8.5px;color:#222'>6</span>
<span class='t' style='left:1226.43px;top:552.00px;font-size:8.5px;line-height:8.5px;color:#222'>7</span>
<span class='t' style='left:1088.43px;top:563.00px;font-size:8.5px;line-height:8.5px;color:#222'>8</span>
<span class='t' style='left:1111.63px;top:563.00px;font-size:8.5px;line-height:8.5px;color:#222'>9</span>
<span class='t' style='left:1132.37px;top:563.00px;font-size:8.5px;line-height:8.5px;color:#222'>10</span>
<span class='t' style='left:1155.59px;top:563.00px;font-size:8.5px;line-height:8.5px;color:#222'>11</span>
<span class='t' style='left:1178.27px;top:563.00px;font-size:8.5px;line-height:8.5px;color:#222'>12</span>
<span class='t' style='left:1201.27px;top:563.00px;font-size:8.5px;line-height:8.5px;color:#222'>13</span>
<span class='t' style='left:1224.07px;top:563.00px;font-size:8.5px;line-height:8.5px;color:#222'>14</span>
<span class='t' style='left:1086.07px;top:574.00px;font-size:8.5px;line-height:8.5px;color:#222'>15</span>
<span class='t' style='left:1109.27px;top:574.00px;font-size:8.5px;line-height:8.5px;color:#222'>16</span>
<span class='t' style='left:1132.37px;top:574.00px;font-size:8.5px;line-height:8.5px;color:#222'>17</span>
<span class='t' style='left:1155.27px;top:574.00px;font-size:8.5px;line-height:8.5px;color:#222'>18</span>
<span class='t' style='left:1178.27px;top:574.00px;font-size:8.5px;line-height:8.5px;color:#222'>19</span>
<span class='t' style='left:1201.27px;top:574.00px;font-size:8.5px;line-height:8.5px;color:#222'>20</span>
<span class='t' style='left:1224.07px;top:574.00px;font-size:8.5px;line-height:8.5px;color:#222'>21</span>
<span class='t' style='left:1086.07px;top:585.00px;font-size:8.5px;line-height:8.5px;color:#222'>22</span>
<span class='t' style='left:1109.27px;top:585.00px;font-size:8.5px;line-height:8.5px;color:#222'>23</span>
<span class='t' style='left:1132.37px;top:585.00px;font-size:8.5px;line-height:8.5px;color:#222'>24</span>
<span class='t' style='left:1155.27px;top:585.00px;font-size:8.5px;line-height:8.5px;color:#222'>25</span>
<span class='t' style='left:1178.27px;top:585.00px;font-size:8.5px;line-height:8.5px;color:#222'>26</span>
<span class='t' style='left:1201.27px;top:585.00px;font-size:8.5px;line-height:8.5px;color:#222'>27</span>
<span class='t' style='left:1224.07px;top:585.00px;font-size:8.5px;line-height:8.5px;color:#222'>28</span>
<span class='t' style='left:1086.07px;top:596.00px;font-size:8.5px;line-height:8.5px;color:#222'>29</span>
<span class='t' style='left:1109.27px;top:596.00px;font-size:8.5px;line-height:8.5px;color:#222'>30</span>
<span class='t' style='left:1132.37px;top:596.00px;font-size:8.5px;line-height:8.5px;color:#e8a030'>31</span>
<span class='t' style='left:1157.63px;top:596.00px;font-size:8.5px;line-height:8.5px;color:#c0c0c0'>1</span>
<span class='t' style='left:1180.63px;top:596.00px;font-size:8.5px;line-height:8.5px;color:#c0c0c0'>2</span>
<span class='t' style='left:1203.63px;top:596.00px;font-size:8.5px;line-height:8.5px;color:#c0c0c0'>3</span>
<span class='t' style='left:1226.43px;top:596.00px;font-size:8.5px;line-height:8.5px;color:#c0c0c0'>4</span>
<span class='t' style='left:1088.43px;top:608.00px;font-size:8.5px;line-height:8.5px;color:#c0c0c0'>5</span>
<span class='t' style='left:1111.63px;top:608.00px;font-size:8.5px;line-height:8.5px;color:#c0c0c0'>6</span>
<span class='t' style='left:1134.73px;top:608.00px;font-size:8.5px;line-height:8.5px;color:#c0c0c0'>7</span>
<span class='t' style='left:1157.63px;top:608.00px;font-size:8.5px;line-height:8.5px;color:#c0c0c0'>8</span>
<span class='t' style='left:1180.63px;top:608.00px;font-size:8.5px;line-height:8.5px;color:#c0c0c0'>9</span>
<span class='t' style='left:1201.27px;top:608.00px;font-size:8.5px;line-height:8.5px;color:#c0c0c0'>10</span>
<span class='t' style='left:1224.39px;top:608.00px;font-size:8.5px;line-height:8.5px;color:#c0c0c0'>11</span>
</body></html>
